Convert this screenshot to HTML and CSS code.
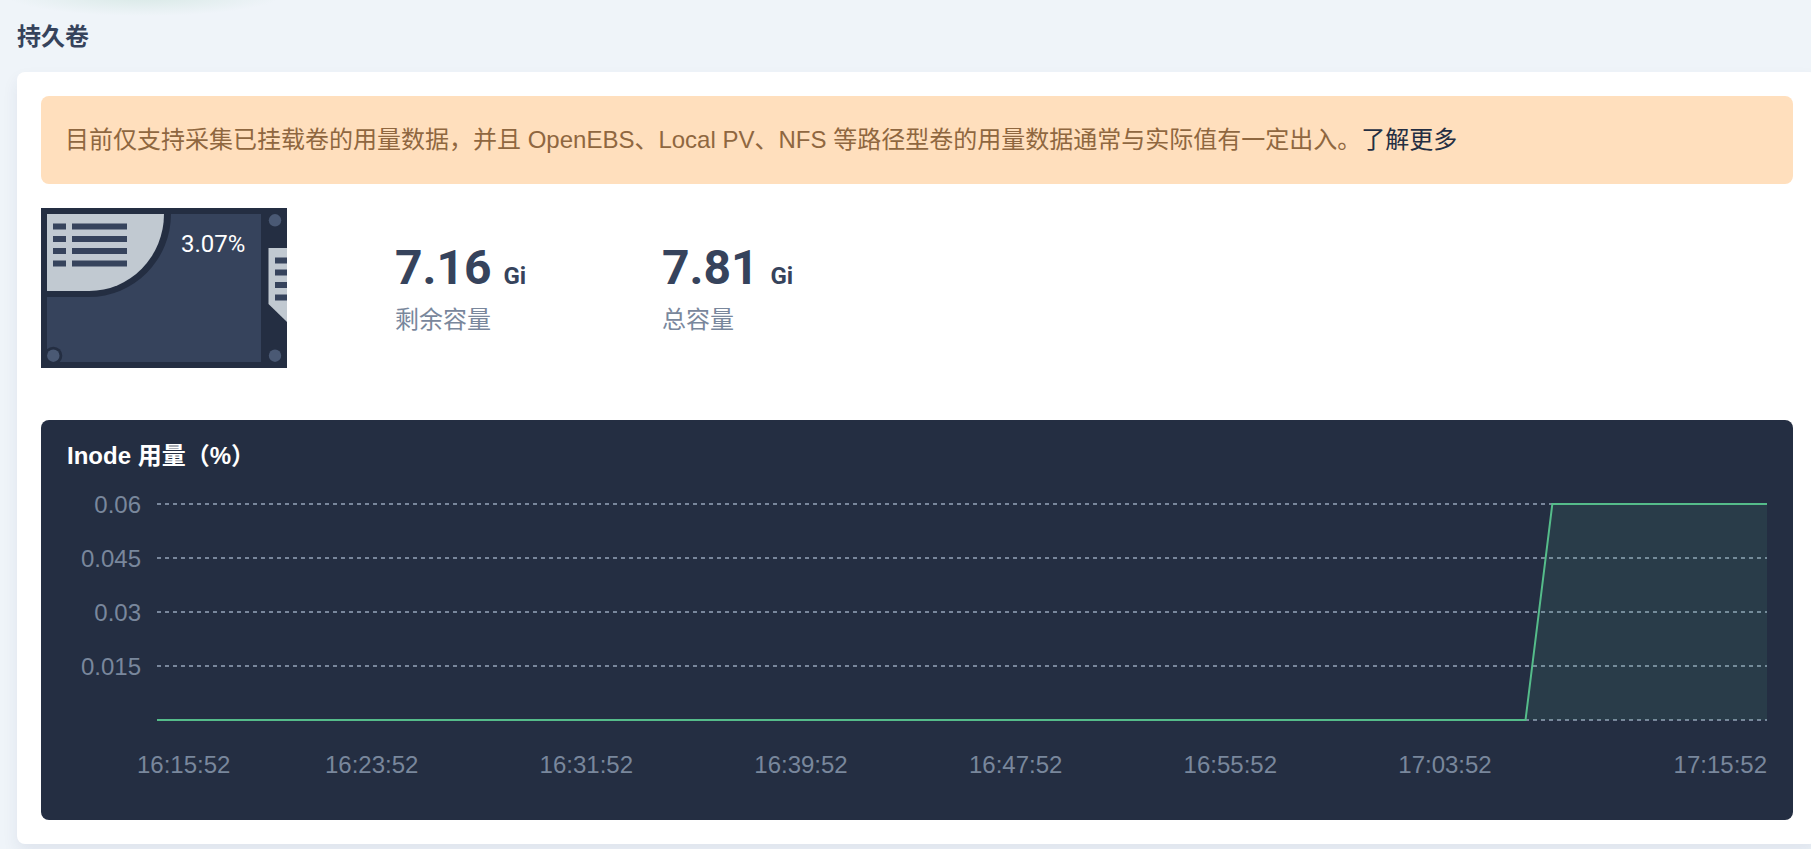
FILE: index.html
```
<!DOCTYPE html>
<html lang="zh-CN">
<head>
<meta charset="utf-8">
<title>持久卷</title>
<link rel="stylesheet" href="styles.css">
</head>
<body>
<main class="page">
  <h2 class="page-title">持久卷</h2>
  <section class="card">
    <p class="notice">目前仅支持采集已挂载卷的用量数据，并且 OpenEBS、Local PV、NFS 等路径型卷的用量数据通常与实际值有一定出入。<a class="notice-link" href="#">了解更多</a></p>

    <div class="usage">
      <svg class="disk" viewBox="0 0 246 160" role="img" aria-label="3.07%">
        <rect width="246" height="160" fill="#242e42"/>
        <rect x="6" y="6" width="214" height="148" fill="#36435c"/>
        <path d="M6 6H130A82 83 0 0 1 48 89H6Z" fill="#242e42"/>
        <path d="M6 6H123A75 77 0 0 1 48 83H6Z" fill="#c1c9d1"/>
        <path d="M12 15.5h13v6H12zM31 15.5h55v6H31zM12 28h13v6H12zM31 28h55v6H31zM12 40h13v6H12zM31 40h55v6H31zM12 52.500h13v6H12zM31 52.500h55v6H31z" fill="#36435c"/>
        <circle cx="12.300" cy="147.700" r="9" fill="#242e42"/>
        <path d="M0 138H6V154H20V160H0Z" fill="#242e42"/>
        <circle cx="12.300" cy="147.700" r="6.200" fill="#4a5974"/>
        <circle cx="234" cy="12.300" r="6.200" fill="#4a5974"/>
        <circle cx="234" cy="147.700" r="6.200" fill="#4a5974"/>
        <path d="M227.500 40H246V114L227.500 96Z" fill="#c1c9d1"/>
        <path d="M234 49.500h12v6h-12zM234 61.500h12v6h-12zM234 74h12v6h-12zM234 86.500h12v6h-12z" fill="#36435c"/>
        <text class="disk-value" x="140" y="44">3.07%</text>
      </svg>
      <dl class="stats">
        <div class="stat">
          <dd class="stat-value">7.16 <span class="stat-unit">Gi</span></dd>
          <dt class="stat-label">剩余容量</dt>
        </div>
        <div class="stat">
          <dd class="stat-value">7.81 <span class="stat-unit">Gi</span></dd>
          <dt class="stat-label">总容量</dt>
        </div>
      </dl>
    </div>

    <section class="chart">
      <h3 class="chart-title">Inode 用量（%）</h3>
      <div class="chart-body">
        <div class="y-axis">
          <span>0.06</span>
          <span>0.045</span>
          <span>0.03</span>
          <span>0.015</span>
        </div>
        <svg class="plot" viewBox="0 0 600 216" preserveAspectRatio="none" aria-hidden="true">
          <path class="grid-line" d="M0 0H600"/>
          <path class="grid-line" d="M0 54H600"/>
          <path class="grid-line" d="M0 108H600"/>
          <path class="grid-line" d="M0 162H600"/>
          <path class="grid-line" d="M0 216H600"/>
          <path class="area" d="M0 216H510L520 0H600V216Z"/>
          <path class="line" d="M0 216H510L520 0H600"/>
        </svg>
        <div class="x-axis">
          <span>16:15:52</span>
          <span>16:23:52</span>
          <span>16:31:52</span>
          <span>16:39:52</span>
          <span>16:47:52</span>
          <span>16:55:52</span>
          <span>17:03:52</span>
          <span>17:15:52</span>
        </div>
      </div>
    </section>
  </section>
</main>
</body>
</html>
```
FILE: styles.css
```
* {
  box-sizing: border-box;
}

body {
  margin: 0;
  background-color: #eff4f9;
  background-image: radial-gradient(ellipse 140px 22px at 144px -6px, #d6e8e4, #eff4f900);
  background-repeat: no-repeat;
  color: #36435c;
  font-family: "Liberation Sans", "Noto Sans CJK SC", sans-serif;
  font-size: 24px;
  overflow-x: hidden;
}

.page {
  padding: 21px 0 24px 17px;
}

.page-title {
  margin: 0 0 19px;
  font-size: 24px;
  line-height: 32px;
}

.card {
  margin-right: -6px;
  padding: 24px;
  border-radius: 8px;
  background: #fff;
  box-shadow: 0 8px 16px rgba(36, 46, 100, 0.08);
}

.notice {
  margin: 0 0 24px;
  padding: 24px;
  border-radius: 8px;
  background: #ffdfbd;
  color: #8f6740;
  line-height: 40px;
}

.notice-link {
  color: #242e42;
  text-decoration: none;
}

.usage {
  display: flex;
  align-items: flex-start;
  gap: 108px;
  margin-bottom: 52px;
}

.disk {
  flex: none;
  width: 246px;
  height: 160px;
}

.disk-value {
  fill: #fff;
  font-family: Roboto, sans-serif;
  font-size: 24px;
}

.stats {
  display: flex;
  margin: 0;
  padding-top: 32px;
}

.stat {
  width: 267px;
}

.stat-value {
  margin: 0;
  font-family: Roboto, sans-serif;
  font-size: 48px;
  font-weight: 700;
  line-height: 56px;
}

.stat-unit {
  font-size: 24px;
}

.stat-label {
  color: #79879c;
  line-height: 32px;
}

.chart {
  padding: 20px 26px 39px;
  border-radius: 8px;
  background: #242e42;
}

.chart-title {
  margin: 0;
  color: #fff;
  font-size: 24px;
  line-height: 32px;
}

.chart-body {
  display: grid;
  grid-template-columns: 74px 1fr;
  column-gap: 16px;
  padding-top: 5px;
  color: #79879c;
}

.y-axis {
  display: grid;
  grid-auto-rows: 54px;
  padding-top: 1px;
  line-height: 54px;
  text-align: right;
}

.plot {
  width: 100%;
  height: 216px;
  margin-top: 27px;
  overflow: visible;
}

.grid-line {
  fill: none;
  stroke: #79879c;
  stroke-width: 2px;
  stroke-dasharray: 4 4;
  vector-effect: non-scaling-stroke;
}

.area {
  fill: #55bc8a;
  fill-opacity: 0.1;
}

.line {
  fill: none;
  stroke: #55bc8a;
  stroke-width: 2px;
  vector-effect: non-scaling-stroke;
}

.x-axis {
  grid-column: 2;
  display: grid;
  grid-template-columns: minmax(0, 4fr) repeat(7, minmax(0, 8fr));
  margin-top: 29px;
  line-height: 32px;
  text-align: center;
}

.x-axis span:first-child {
  margin-left: -20px;
  text-align: left;
}

.x-axis span:last-child {
  text-align: right;
}
```
